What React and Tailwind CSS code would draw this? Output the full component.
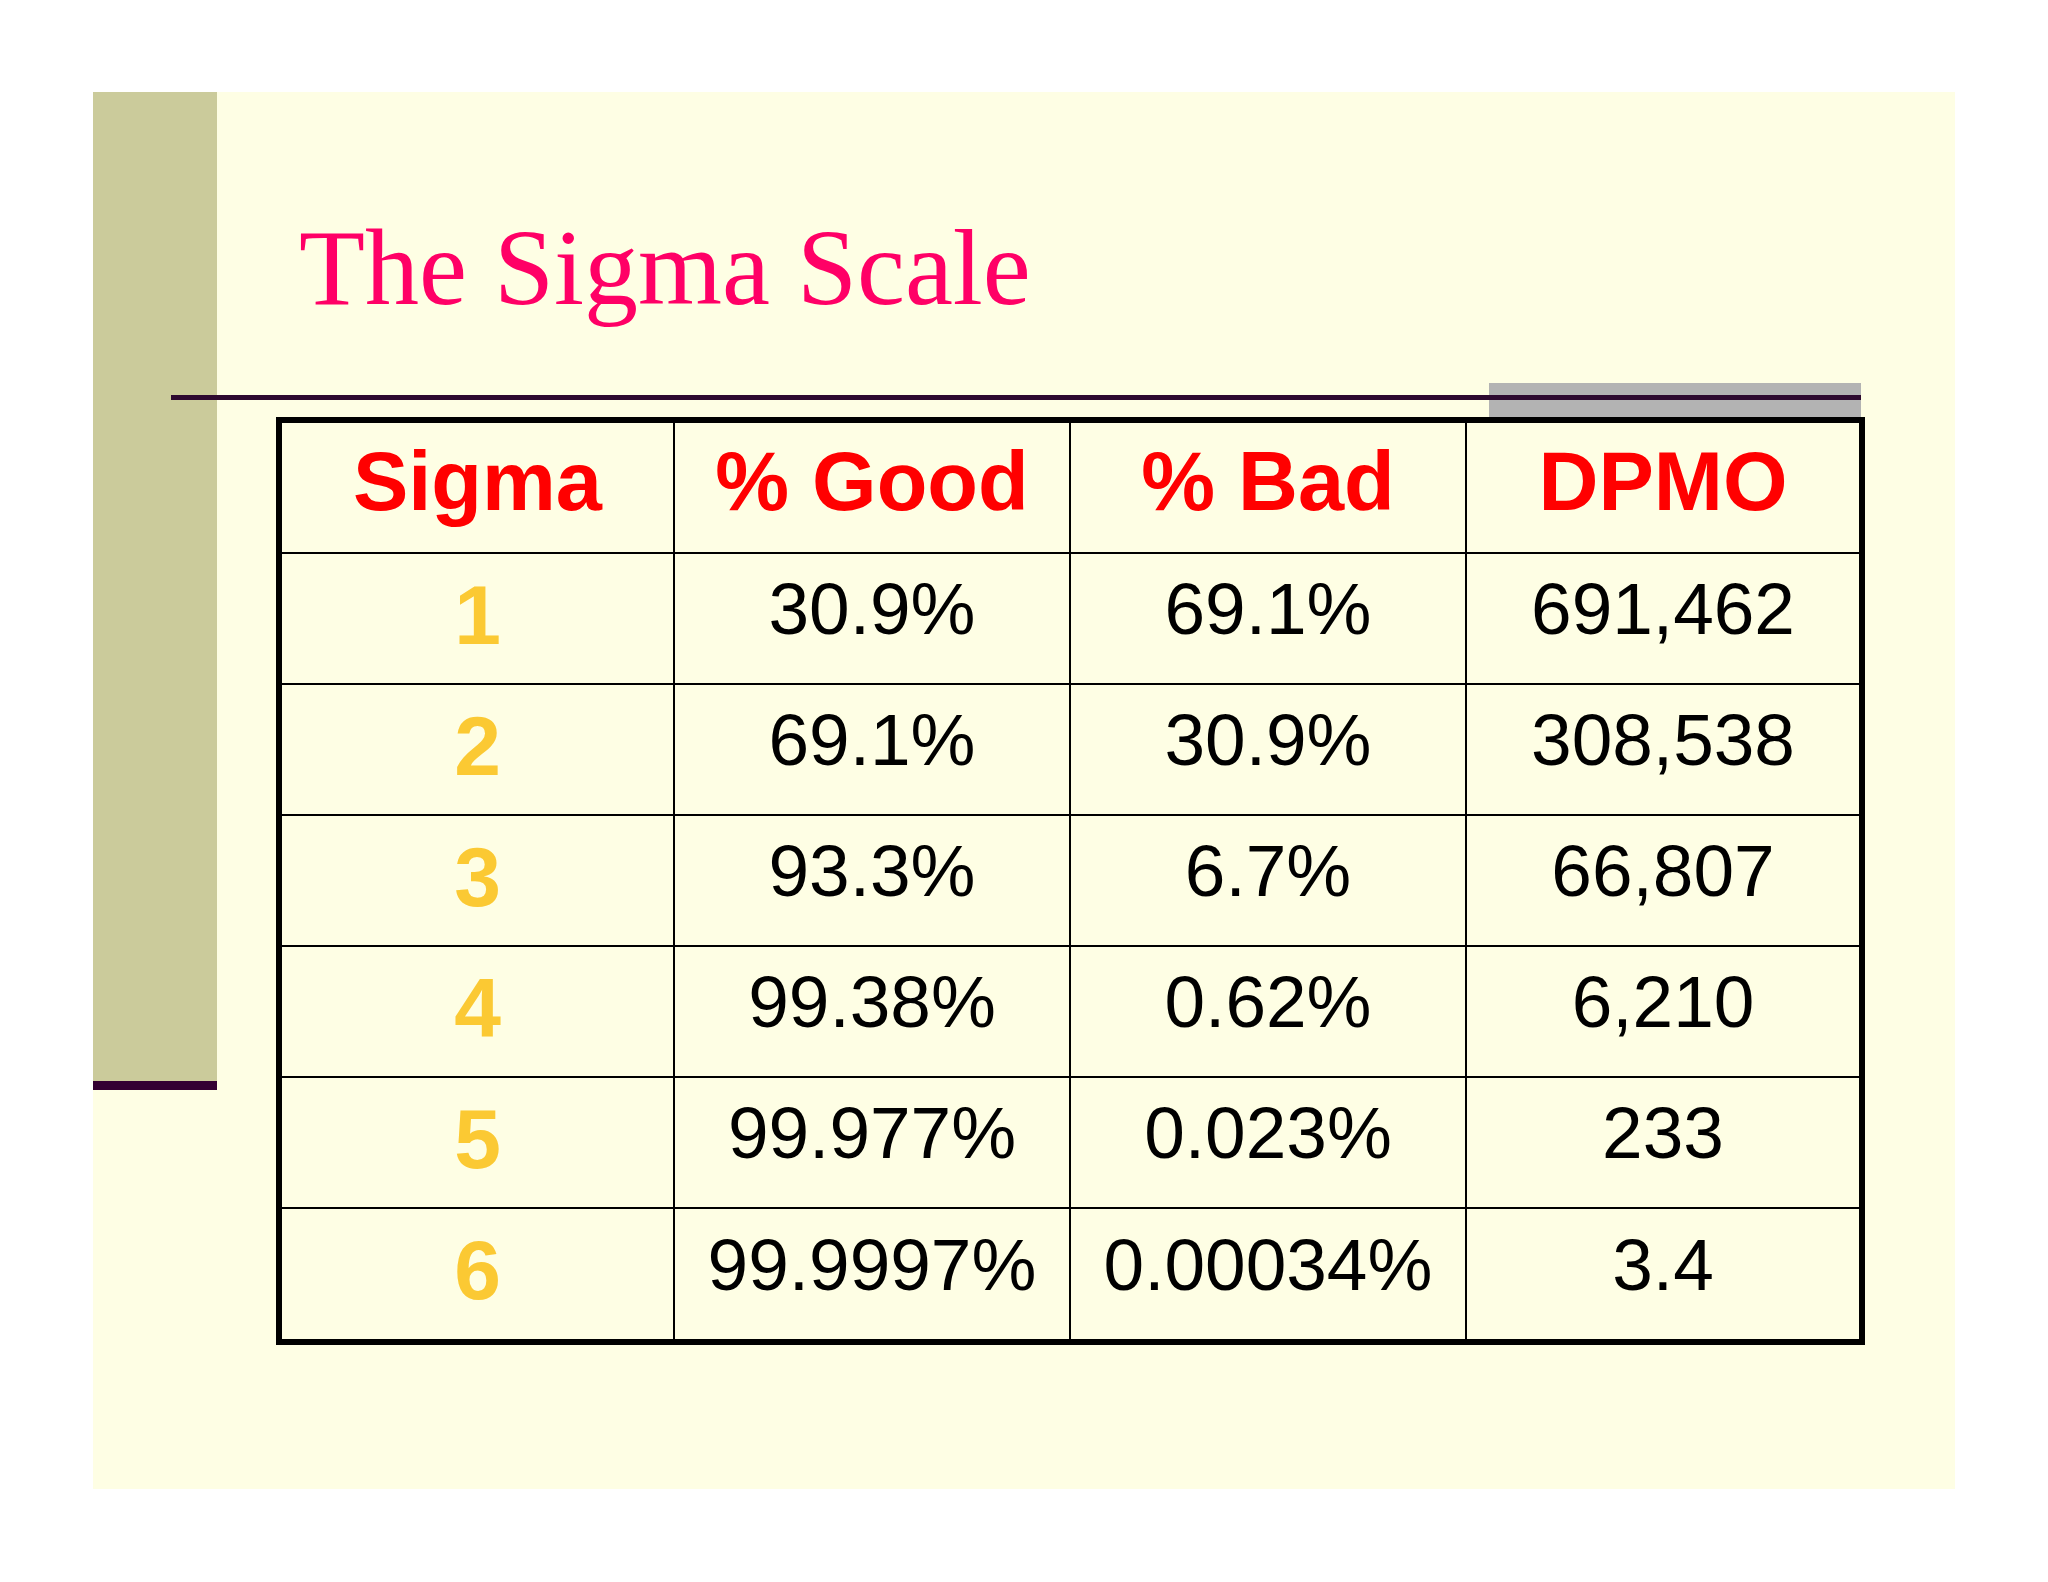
import React from "react";

const rows = [
  ["1", "30.9%", "69.1%", "691,462"],
  ["2", "69.1%", "30.9%", "308,538"],
  ["3", "93.3%", "6.7%", "66,807"],
  ["4", "99.38%", "0.62%", "6,210"],
  ["5", "99.977%", "0.023%", "233"],
  ["6", "99.9997%", "0.00034%", "3.4"],
];

const headers = ["Sigma", "% Good", "% Bad", "DPMO"];

export default function App() {
  return (
    <div className="w-[2048px] h-[1582px] bg-white pt-[92px] pl-[93px]">
      <div className="w-[1862px] h-[1397px] flex bg-[#fefee4]">
        {/* left olive column */}
        <div className="w-[124px] flex flex-col">
          <div className="h-[989px] bg-[#cbcb9b]" />
          <div className="h-[9px] bg-[#330033]" />
        </div>
        {/* content */}
        <div className="flex-1 flex flex-col">
          <h1
            className="mt-[122px] pl-[82px] text-[108px] leading-none text-[#ff0066] font-normal"
            style={{ fontFamily: '"Liberation Serif", "Times New Roman", serif' }}
          >
            The Sigma Scale
          </h1>
          {/* rule with grey block */}
          <div className="mt-[61px] ml-[-46px] w-[1690px] h-[34px] flex">
            <div className="flex-1 pt-[12px]">
              <div className="h-[5px] bg-[#2e0a30]" />
            </div>
            <div className="w-[372px] bg-[#b3b3b3] pt-[12px]">
              <div className="h-[5px] bg-[#2e0a30]" />
            </div>
          </div>
          {/* table */}
          <div
            className="ml-[59px] w-[1589px] border-[6px] border-black flex flex-col"
            style={{ fontFamily: '"Liberation Sans", Arial, sans-serif' }}
          >
            <div className="grid grid-cols-[393px_396px_396px_1fr] h-[131px] border-b-2 border-black">
              {headers.map((h, i) => (
                <div
                  key={h}
                  className={`flex items-center justify-center pb-[12px] text-[83px] leading-none font-bold text-[#ff0000] ${
                    i < 3 ? "border-r-2 border-black" : ""
                  }`}
                >
                  {h}
                </div>
              ))}
            </div>
            {rows.map((r, ri) => (
              <div
                key={r[0]}
                className={`grid grid-cols-[393px_396px_396px_1fr] ${
                  ri < rows.length - 1 ? "h-[131px] border-b-2 border-black" : "h-[130px]"
                }`}
              >
                <div className="flex items-center justify-center pb-[8px] border-r-2 border-black text-[84px] leading-none font-bold text-[#fbc933]">
                  {r[0]}
                </div>
                <div className="flex items-center justify-center pb-[20px] border-r-2 border-black text-[73px] leading-none text-black whitespace-nowrap">
                  {r[1]}
                </div>
                <div className="flex items-center justify-center pb-[20px] border-r-2 border-black text-[73px] leading-none text-black whitespace-nowrap">
                  {r[2]}
                </div>
                <div className="flex items-center justify-center pb-[20px] text-[73px] leading-none text-black whitespace-nowrap">
                  {r[3]}
                </div>
              </div>
            ))}
          </div>
        </div>
      </div>
    </div>
  );
}
